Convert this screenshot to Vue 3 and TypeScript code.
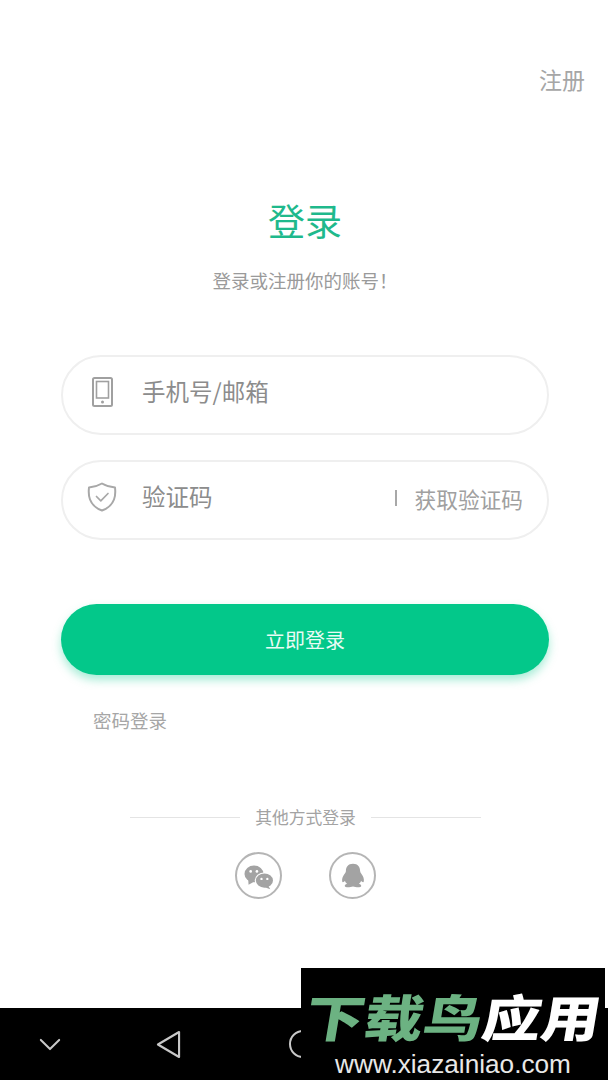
<script setup lang="ts">
const socials = ['wechat', 'qq'];
</script>

<template>
  <div class="page">
    <main class="main">
      <div class="top-bar">
        <span class="register">注册</span>
      </div>

      <h1 class="title">登录</h1>
      <p class="subtitle">登录或注册你的账号！</p>

      <div class="form">
        <div class="field">
          <svg class="field-icon" viewBox="0 0 30 30" fill="none" stroke="#a0a0a0" stroke-width="2">
            <rect x="6" y="1" width="19" height="28" rx="1.5" />
            <rect x="9.5" y="4.5" width="12" height="16.5" stroke-width="1.6" />
            <circle cx="15.5" cy="25" r="1.5" fill="#a0a0a0" stroke="none" />
          </svg>
          <span class="field-label">手机号/邮箱</span>
        </div>

        <div class="field">
          <svg class="field-icon" viewBox="0 0 30 30" fill="none" stroke="#a8a8a8" stroke-width="2" stroke-linejoin="round" stroke-linecap="round">
            <path d="M15 1.5C11.5 3.6 6.5 5 2 5.5C1.5 10 1.6 14 3 17.5C5 22.5 9.5 26.5 15 28.5C20.5 26.5 25 22.5 27 17.5C28.4 14 28.5 10 28 5.5C23.5 5 18.5 3.6 15 1.5Z" />
            <path d="M9.5 14.5L13.8 18.8L21 11.5" stroke-width="1.7" />
          </svg>
          <span class="field-label">验证码</span>
          <span class="code-action"><i class="code-sep"></i>获取验证码</span>
        </div>
      </div>

      <button class="submit" type="button">立即登录</button>
      <a class="password-link">密码登录</a>

      <div class="divider">
        <span class="divider-line"></span>
        <span class="divider-text">其他方式登录</span>
        <span class="divider-line"></span>
      </div>

      <div class="socials">
        <div v-for="s in socials" :key="s" class="social">
          <svg v-if="s === 'wechat'" class="social-icon" viewBox="0 0 36 36">
            <ellipse cx="12" cy="15.5" rx="11.4" ry="10" fill="#a3a3a3" />
            <path d="M5 22L5.5 28.5L12 25Z" fill="#a3a3a3" />
            <circle cx="8" cy="12.5" r="1.6" fill="#fff" />
            <circle cx="15.5" cy="12.5" r="1.6" fill="#fff" />
            <ellipse cx="24.5" cy="23.5" rx="11.6" ry="9.8" fill="#fff" />
            <ellipse cx="24.5" cy="23.5" rx="10.3" ry="8.5" fill="#a3a3a3" />
            <path d="M29 29.5L31.5 34L25 31.5Z" fill="#a3a3a3" />
            <circle cx="21" cy="21.5" r="1.4" fill="#fff" />
            <circle cx="28" cy="21.5" r="1.4" fill="#fff" />
          </svg>
          <svg v-else class="social-icon" viewBox="0 0 36 36">
            <path
              transform="translate(0 1.4) scale(1 .9)"
              d="M18 2C12 2 9.5 6.5 9.5 11.5C9.5 13 9 14 8 15.5C6 18.5 4.5 22 5 25.5C5.3 27.5 6.8 27 8.3 24.8C8.8 26.5 9.5 27.7 10.8 28.8C9 29.6 7.8 30.6 8.2 32C8.7 33.5 12 33.8 15 33C16.2 32.7 17 32.3 18 32.3C19 32.3 19.8 32.7 21 33C24 33.8 27.3 33.5 27.8 32C28.2 30.6 27 29.6 25.2 28.8C26.5 27.7 27.2 26.5 27.7 24.8C29.2 27 30.7 27.5 31 25.5C31.5 22 30 18.5 28 15.5C27 14 26.5 13 26.5 11.5C26.5 6.5 24 2 18 2Z"
              fill="#a3a3a3"
            />
          </svg>
        </div>
      </div>
    </main>

    <nav class="nav">
      <svg class="nav-back-chevron" viewBox="0 0 24 14" fill="none" stroke="#c8c8c8" stroke-width="2.2" stroke-linecap="round" stroke-linejoin="round">
        <path d="M2 2L12 12L22 2" />
      </svg>
      <svg class="nav-triangle" viewBox="0 0 26 30" fill="none" stroke="#c8c8c8" stroke-width="2.2" stroke-linejoin="round">
        <path d="M24 2V28L2 15Z" />
      </svg>
      <span class="nav-circle"></span>
    </nav>

    <!-- watermark sits over the nav bar -->
    <div class="watermark">
      <div class="wm-title"><span class="wm-green">下载鸟</span><span class="wm-white">应用</span></div>
      <div class="wm-url">www.xiazainiao.com</div>
    </div>
  </div>
</template>

<style>
html,
body {
  margin: 0;
  background: #fff;
}
</style>

<style scoped>
.page {
  position: relative;
  width: 608px;
  height: 1080px;
  overflow: hidden;
  display: flex;
  flex-direction: column;
  background: #fff;
  font-family: "Noto Sans CJK SC", "Noto Sans", sans-serif;
}

.main {
  flex: 1;
  display: flex;
  flex-direction: column;
  padding: 0 59px 0 61px;
}

.top-bar {
  display: flex;
  justify-content: flex-end;
  margin-right: -36px;
  padding-top: 62px;
}

.register {
  font-size: 23px;
  line-height: 34px;
  color: #a6a6a6;
}

.title {
  margin: 95px 0 0;
  font-size: 37px;
  line-height: 58px;
  font-weight: 400;
  color: #1fb98c;
  text-align: center;
}

.subtitle {
  margin: 17px 0 0;
  font-size: 18.5px;
  line-height: 28px;
  color: #9a9a9a;
  text-align: center;
}

.form {
  display: flex;
  flex-direction: column;
  gap: 25px;
  margin-top: 61px;
}

.field {
  height: 80px;
  box-sizing: border-box;
  display: flex;
  align-items: center;
  padding: 0 24px 8px 24px;
  border: 2px solid #efefef;
  border-radius: 40px;
}

.field-icon {
  width: 30px;
  height: 30px;
  margin-top: 2px;
  flex: none;
}

.field-label {
  margin-left: 25px;
  font-size: 23.5px;
  color: #8c8c8c;
}

.code-action {
  margin-left: auto;
  margin-top: 4px;
  display: flex;
  align-items: center;
  font-size: 21.7px;
  color: #a0a0a0;
}

.code-sep {
  width: 2px;
  height: 16px;
  margin-right: 18px;
  background: #a8a8a8;
}

.submit {
  height: 71px;
  margin-top: 64px;
  border: 0;
  border-radius: 36px;
  background: #03c88a;
  box-shadow: 0 5px 10px rgba(0, 201, 138, 0.35);
  color: #e9fbf4;
  font-family: inherit;
  font-size: 20px;
}

.password-link {
  margin: 31px 0 0 32px;
  font-size: 18.5px;
  line-height: 28px;
  color: #a6a6a6;
}

.divider {
  display: flex;
  align-items: center;
  justify-content: center;
  gap: 15px;
  margin-top: 71px;
  margin-left: 1px;
}

.divider-line {
  width: 110px;
  height: 1px;
  background: #e4e4e4;
}

.divider-text {
  font-size: 16.8px;
  line-height: 24px;
  color: #a3a3a3;
}

.socials {
  display: flex;
  justify-content: center;
  gap: 47px;
  margin-top: 23px;
  margin-left: 1px;
}

.social {
  width: 47px;
  height: 47px;
  box-sizing: border-box;
  display: flex;
  align-items: center;
  justify-content: center;
  border: 2px solid #b5b5b5;
  border-radius: 50%;
}

.social-icon {
  width: 30px;
  height: 30px;
}

.nav {
  height: 72px;
  flex: none;
  display: flex;
  align-items: center;
  background: #000;
  padding-left: 39px;
}

.nav-back-chevron {
  width: 22px;
  height: 13px;
}

.nav-triangle {
  width: 25px;
  height: 29px;
  margin-left: 95px;
}

.nav-circle {
  width: 28px;
  height: 28px;
  margin-left: 108px;
  box-sizing: border-box;
  border: 2px solid #c8c8c8;
  border-radius: 50%;
}

.watermark {
  position: absolute;
  left: 301px;
  top: 968px;
  width: 304px;
  height: 112px;
  background: #000;
  display: flex;
  flex-direction: column;
  align-items: center;
}

.wm-title {
  margin-top: 22px;
  margin-left: 1px;
  height: 50px;
  font-size: 50px;
  line-height: 50px;
  font-weight: 900;
  white-space: nowrap;
  transform: scaleX(1.18) skewX(-8deg);
}

.wm-green {
  color: #6cb282;
}

.wm-white {
  color: #fff;
}

.wm-url {
  margin-top: 9px;
  font-family: "Liberation Sans", sans-serif;
  font-size: 26.2px;
  line-height: 30px;
  color: #e8e8e8;
}
</style>
